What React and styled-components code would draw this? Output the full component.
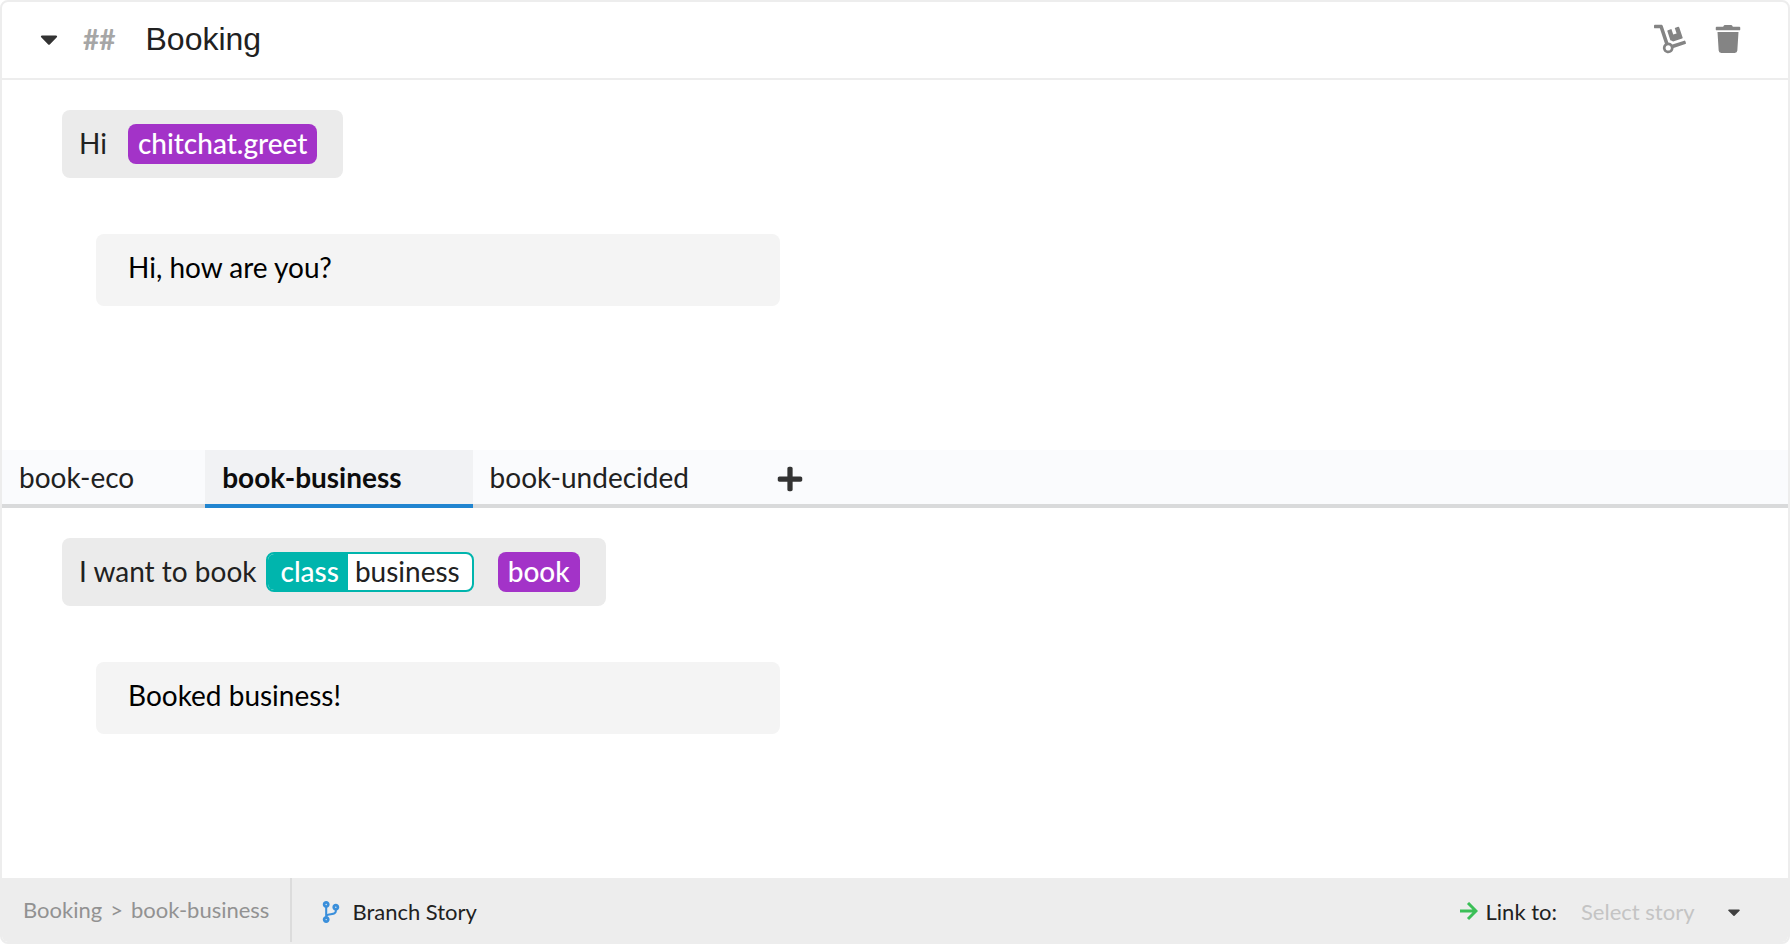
import React from "react";
import styled, { createGlobalStyle } from "styled-components";
import { FaCaretDown, FaPlus, FaTrash, FaDolly, FaCodeBranch } from "react-icons/fa";

const GlobalStyle = createGlobalStyle`
  *, *::before, *::after { box-sizing: border-box; }
  body {
    margin: 0;
    background: #fff;
    color: #212121;
    font-family: Lato, "Liberation Sans", sans-serif;
    font-size: 28px;
    line-height: 40px;
  }
  button, input, select { font: inherit; color: inherit; }
`;

const Card = styled.main`
  display: flex;
  flex-direction: column;
  min-height: 100vh;
  border: 2px solid #ededed;
  border-radius: 8px;
  overflow: hidden;
`;

const Header = styled.header`
  display: flex;
  align-items: center;
  height: 78px;
  padding: 0 46px 2px 33px;
  border-bottom: 2px solid #ededed;
`;

const IconButton = styled.button`
  display: flex;
  align-items: center;
  justify-content: center;
  padding: 0;
  border: 0;
  background: none;
  color: ${(p) => p.$color || "#333"};
  cursor: pointer;
`;

const Prefix = styled.span`
  margin-left: 20px;
  color: #a6a6a6;
  font-weight: 700;
`;

const TitleInput = styled.input`
  flex: 1;
  min-width: 0;
  margin-left: 30px;
  padding: 0;
  border: 0;
  outline: 0;
  background: none;
  font-family: "Liberation Sans", Arial, sans-serif;
  font-size: 32px;
`;

const Actions = styled.div`
  display: flex;
  align-items: center;
  gap: 28px;
`;

const Conversation = styled.section`
  display: flex;
  flex-direction: column;
  align-items: flex-start;
  gap: 56px;
  padding: 30px 60px 144px;
`;

const UserUtterance = styled.div`
  display: flex;
  align-items: flex-start;
  padding: 14px 26px 14px 17px;
  border-radius: 8px;
  background: #ebebeb;
  line-height: 38px;
`;

const Intent = styled.button`
  height: 40px;
  margin-left: ${(p) => p.$gap}px;
  padding: 0 10px 2px;
  border: 0;
  border-radius: 8px;
  background: #a333c8;
  color: #fff;
  font-weight: 500;
  line-height: 38px;
  cursor: pointer;
`;

const Entity = styled.button`
  display: flex;
  height: 40px;
  margin-left: 10px;
  padding: 0;
  border: 2px solid #00b5ad;
  border-radius: 8px;
  overflow: hidden;
  background: #fff;
  line-height: 34px;
  cursor: pointer;
`;

const EntityName = styled.span`
  padding: 0 9px 0 12px;
  background: #00b5ad;
  color: #fff;
  font-weight: 500;
`;

const EntityValue = styled.span`
  padding: 0 12px 0 7px;
`;

const BotResponse = styled.div`
  width: 684px;
  max-width: 100%;
  margin-left: 34px;
  padding: 13px 32px 19px;
  border-radius: 8px;
  background: #f4f4f4;
  color: #000;
`;

const Tabs = styled.nav`
  display: flex;
  height: 58px;
  background: #fafbfd;
  box-shadow: inset 0 -4px #d9dadb;
`;

const Tab = styled.button`
  padding: 0 71px 0 17px;
  border: 0;
  border-bottom: 4px solid ${(p) => (p.$active ? "#2185d0" : "transparent")};
  background: ${(p) => (p.$active ? "#f1f2f4" : "transparent")};
  color: ${(p) => (p.$active ? "#0d0d0d" : "#212121")};
  font-weight: ${(p) => (p.$active ? 700 : 400)};
  line-height: 54px;
  cursor: pointer;
`;

const AddTab = styled(IconButton)`
  margin-left: 16px;
`;

const Footer = styled.footer`
  display: flex;
  height: 64px;
  margin-top: auto;
  background: #ededed;
  font-size: 22px;
  line-height: 64px;
`;

const Breadcrumb = styled.div`
  display: flex;
  gap: 8px;
  padding: 0 21px;
  border-right: 2px solid #dcdcdc;
  color: #929292;
`;

const BranchButton = styled.button`
  display: flex;
  align-items: center;
  gap: 10px;
  padding: 4px 28px 0;
  border: 0;
  background: none;
  cursor: pointer;
`;

const LinkTo = styled.div`
  display: flex;
  align-items: center;
  margin-left: auto;
  padding: 4px 44px 0 0;
`;

const LinkLabel = styled.label`
  margin: 0 24px 0 8px;
`;

const StorySelect = styled.select`
  width: 143px;
  padding: 0;
  border: 0;
  outline: 0;
  appearance: none;
  background: none;
  color: #c4c4c4;
`;

const ArrowIcon = () => (
  <svg width="18" height="20" viewBox="0 0 18 20" fill="none" stroke="#3bbf57" strokeWidth="3" aria-hidden="true">
    <path d="M0 9H16M8 1L16 9L8 17" />
  </svg>
);

const TABS = [
  { name: "book-eco" },
  { name: "book-business", active: true },
  { name: "book-undecided" },
];

export default function App() {
  return (
    <>
      <GlobalStyle />
      <Card>
        <Header>
          <IconButton aria-label="Collapse story">
            <FaCaretDown size={28} />
          </IconButton>
          <Prefix>##</Prefix>
          <TitleInput aria-label="Story name" defaultValue="Booking" />
          <Actions>
            <IconButton aria-label="Move story" $color="#848484">
              <FaDolly size={32} />
            </IconButton>
            <IconButton aria-label="Delete story" $color="#848484">
              <FaTrash size={28} />
            </IconButton>
          </Actions>
        </Header>

        <Conversation>
          <UserUtterance>
            <span>Hi</span>
            <Intent $gap={21}>chitchat.greet</Intent>
          </UserUtterance>
          <BotResponse>Hi, how are you?</BotResponse>
        </Conversation>

        <Tabs>
          {TABS.map((t) => (
            <Tab key={t.name} $active={t.active}>
              {t.name}
            </Tab>
          ))}
          <AddTab aria-label="Add branch">
            <FaPlus size={28} />
          </AddTab>
        </Tabs>

        <Conversation>
          <UserUtterance>
            <span>I want to book</span>
            <Entity>
              <EntityName>class</EntityName>
              <EntityValue>business</EntityValue>
            </Entity>
            <Intent $gap={24}>book</Intent>
          </UserUtterance>
          <BotResponse>Booked business!</BotResponse>
        </Conversation>

        <Footer>
          <Breadcrumb>
            <span>Booking</span>
            <span>&gt;</span>
            <span>book-business</span>
          </Breadcrumb>
          <BranchButton>
            <FaCodeBranch size={22} color="#3a8fdb" />
            Branch Story
          </BranchButton>
          <LinkTo>
            <ArrowIcon />
            <LinkLabel htmlFor="link-story">Link to:</LinkLabel>
            <StorySelect id="link-story">
              <option>Select story</option>
            </StorySelect>
            <FaCaretDown size={20} color="#404040" />
          </LinkTo>
        </Footer>
      </Card>
    </>
  );
}
